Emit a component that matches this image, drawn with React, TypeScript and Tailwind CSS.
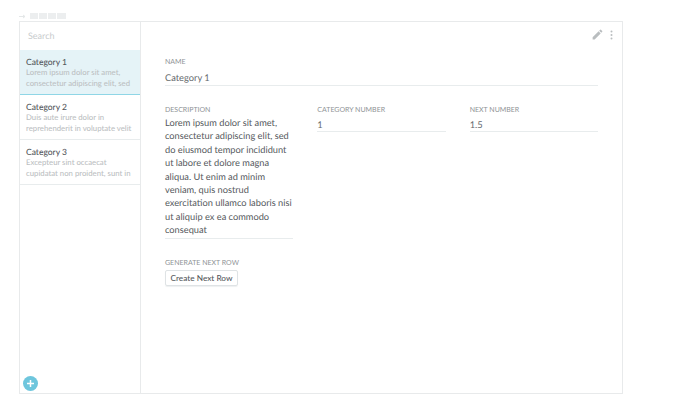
const categories = [
  { title: 'Category 1', text: ['Lorem ipsum dolor sit amet,', 'consectetur adipiscing elit, sed'], active: true },
  { title: 'Category 2', text: ['Duis aute irure dolor in', 'reprehenderit in voluptate velit'], active: false },
  { title: 'Category 3', text: ['Excepteur sint occaecat', 'cupidatat non proident, sunt in'], active: false },
];

const labelClass = 'text-[7px] leading-[10px] text-[#8f9396]';
const valueClass = 'text-[9.3px] leading-[11px] text-[#65696d]';

function Field({ label, value }: { label: string; value: string }) {
  return (
    <div>
      <div className={labelClass}>{label}</div>
      <div className={`mt-[4px] border-b border-[#e8eced] pb-[1px] ${valueClass}`}>{value}</div>
    </div>
  );
}

export default function App() {
  return (
    <div className="h-[419px] w-[689px] bg-white font-['Lato',sans-serif] [text-rendering:geometricPrecision]">
      <div className="ml-[19px] flex h-[21px] items-center gap-[1px] pt-[11px]">
        <svg width="7" height="5" viewBox="0 0 7 5" className="mr-[3px] text-[#e4e7e8]">
          <path d="M0 2.5h6M4 1l2 1.5-2 1.5" fill="none" stroke="currentColor" />
        </svg>
        <span className="h-[6px] w-[8px] bg-[#eceeef]" />
        <span className="h-[6px] w-[8px] bg-[#eceeef]" />
        <span className="h-[6px] w-[8px] bg-[#eceeef]" />
        <span className="h-[6px] w-[9px] bg-[#eceeef]" />
      </div>

      <div className="ml-[19px] flex h-[373px] w-[604px] border border-[#e8eaeb]">
        <aside className="relative flex w-[121px] shrink-0 flex-col border-r border-[#e8eaeb]">
          <div className="flex h-[28px] items-center pl-[8px] text-[9px] text-[#c8cbcd]">Search</div>
          {categories.map((c) => (
            <div
              key={c.title}
              className={`h-[45px] px-[6px] pt-[7px] ${c.active ? 'border-b border-[#8fd6e6] bg-[#e5f3f7]' : 'border-b border-[#e8eced]'}`}
            >
              <div className="text-[8.5px] leading-[10px] font-medium text-[#54585c]">{c.title}</div>
              {c.text.map((line) => (
                <div key={line} className="whitespace-nowrap text-[7.75px] leading-[10.5px] font-medium text-[#bcc0c2]">
                  {line}
                </div>
              ))}
            </div>
          ))}
          <button
            type="button"
            className="absolute bottom-[2px] left-[3px] flex size-[15px] items-center justify-center rounded-full bg-[#6ec6dd]"
          >
            <svg width="9" height="9" viewBox="0 0 9 9">
              <path d="M4.5 1v7M1 4.5h7" stroke="white" strokeWidth="1.5" />
            </svg>
          </button>
        </aside>

        <main className="relative flex-1 pl-[24px] pr-[24px] pt-[35px]">
          <div className="absolute right-[9px] top-[6px] flex items-center gap-[6px]">
            <svg width="13" height="13" viewBox="0 0 24 24" fill="#b9bdbf">
              <path d="M3 17.25V21h3.75L17.81 9.94l-3.75-3.75L3 17.25zM20.71 7.04a1 1 0 0 0 0-1.41l-2.34-2.34a1 1 0 0 0-1.41 0l-1.83 1.83 3.75 3.75 1.83-1.83z" />
            </svg>
            <svg width="3" height="10" viewBox="0 0 3 10" fill="#b9bdbf">
              <circle cx="1.5" cy="1.5" r="1" />
              <circle cx="1.5" cy="5" r="1" />
              <circle cx="1.5" cy="8.5" r="1" />
            </svg>
          </div>

          <div className={labelClass}>NAME</div>
          <div className={`mt-[5px] border-b border-[#e8eced] pb-[2px] ${valueClass}`}>Category 1</div>

          <div className="mt-[19px] grid grid-cols-3 items-start gap-[24px]">
            <div>
              <div className={labelClass}>DESCRIPTION</div>
              <div className="mt-[1px] border-b border-[#e8eced] pb-[1px] text-[9.25px] leading-[13.4px] text-[#55595d]">
                Lorem ipsum dolor sit amet, consectetur adipiscing elit, sed do eiusmod tempor incididunt ut labore et
                dolore magna aliqua. Ut enim ad minim veniam, quis nostrud exercitation ullamco laboris nisi ut aliquip
                ex ea commodo consequat
              </div>
            </div>
            <Field label="CATEGORY NUMBER" value="1" />
            <Field label="NEXT NUMBER" value="1.5" />
          </div>

          <div className={`mt-[19px] ${labelClass}`}>GENERATE NEXT ROW</div>
          <button
            type="button"
            className="mt-[2px] block h-[16px] w-[73px] rounded-[2px] border border-[#dfe3e5] text-[8.25px] leading-none font-medium text-[#54585c] shadow-[0_1px_1px_#eef0f1]"
          >
            Create Next Row
          </button>
        </main>
      </div>
    </div>
  );
}
